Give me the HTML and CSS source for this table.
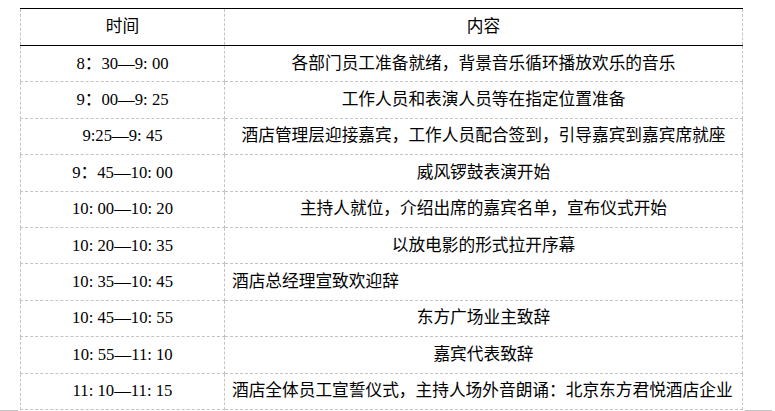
FILE: index.html
```html
<!DOCTYPE html>
<html lang="zh-CN">
<head>
<meta charset="utf-8">
<title>流程安排</title>
<link rel="stylesheet" href="styles.css">
</head>
<body>
<div class="page">
  <table class="schedule">
    <colgroup>
      <col class="col-time">
      <col class="col-content">
    </colgroup>
    <thead>
      <tr><th>时间</th><th>内容</th></tr>
    </thead>
    <tbody>
      <tr><td>8：30—9: 00</td><td>各部门员工准备就绪，背景音乐循环播放欢乐的音乐</td></tr>
      <tr><td>9：00—9: 25</td><td>工作人员和表演人员等在指定位置准备</td></tr>
      <tr><td>9:25—9: 45</td><td>酒店管理层迎接嘉宾，工作人员配合签到，引导嘉宾到嘉宾席就座</td></tr>
      <tr><td>9：45—10: 00</td><td>威风锣鼓表演开始</td></tr>
      <tr><td>10: 00—10: 20</td><td>主持人就位，介绍出席的嘉宾名单，宣布仪式开始</td></tr>
      <tr><td>10: 20—10: 35</td><td>以放电影的形式拉开序幕</td></tr>
      <tr><td>10: 35—10: 45</td><td class="left">酒店总经理宣致欢迎辞</td></tr>
      <tr><td>10: 45—10: 55</td><td>东方广场业主致辞</td></tr>
      <tr><td>10: 55—11: 10</td><td>嘉宾代表致辞</td></tr>
      <tr><td>11: 10—11: 15</td><td class="left">酒店全体员工宣誓仪式，主持人场外音朗诵：北京东方君悦酒店企业</td></tr>
    </tbody>
  </table>
  <span class="mark mark-left"></span>
  <span class="mark mark-right"></span>
</div>
</body>
</html>
```

FILE: styles.css
```css
html, body {
  margin: 0;
  padding: 0;
  background: #ffffff;
}

.page {
  position: relative;
  width: 775px;
  height: 411px;
  overflow: hidden;
  padding: 8px 0 0 20px;
  box-sizing: border-box;
}

.schedule {
  border-collapse: collapse;
  table-layout: fixed;
  width: 722px;
  font-family: "Liberation Serif", "Noto Sans CJK SC", serif;
  font-size: 16.7px;
  color: #000000;
  border-left: 1px dashed #c4c4c4;
  border-right: 1px dashed #c4c4c4;
}

.col-time {
  width: 204px;
}

.col-content {
  width: 518px;
}

.schedule th,
.schedule td {
  padding: 0 7px;
  text-align: center;
  vertical-align: middle;
  white-space: nowrap;
  font-weight: normal;
  line-height: 20px;
}

.schedule th {
  height: 36px;
  border-top: 1px solid #000000;
  border-bottom: 1px solid #000000;
  border-left: 1px dashed #c4c4c4;
  border-right: 1px dashed #c4c4c4;
}

.schedule td {
  height: 35.4px;
  border: 1px dashed #c4c4c4;
}

.schedule tbody tr:first-child td {
  border-top: 1px solid #000000;
}

.schedule td.left {
  text-align: left;
}

.mark {
  position: absolute;
  top: 410px;
  height: 1px;
  background: #c4c4c4;
}

.mark-left {
  left: 0;
  width: 18px;
}

.mark-right {
  left: 745px;
  width: 27px;
}
```
